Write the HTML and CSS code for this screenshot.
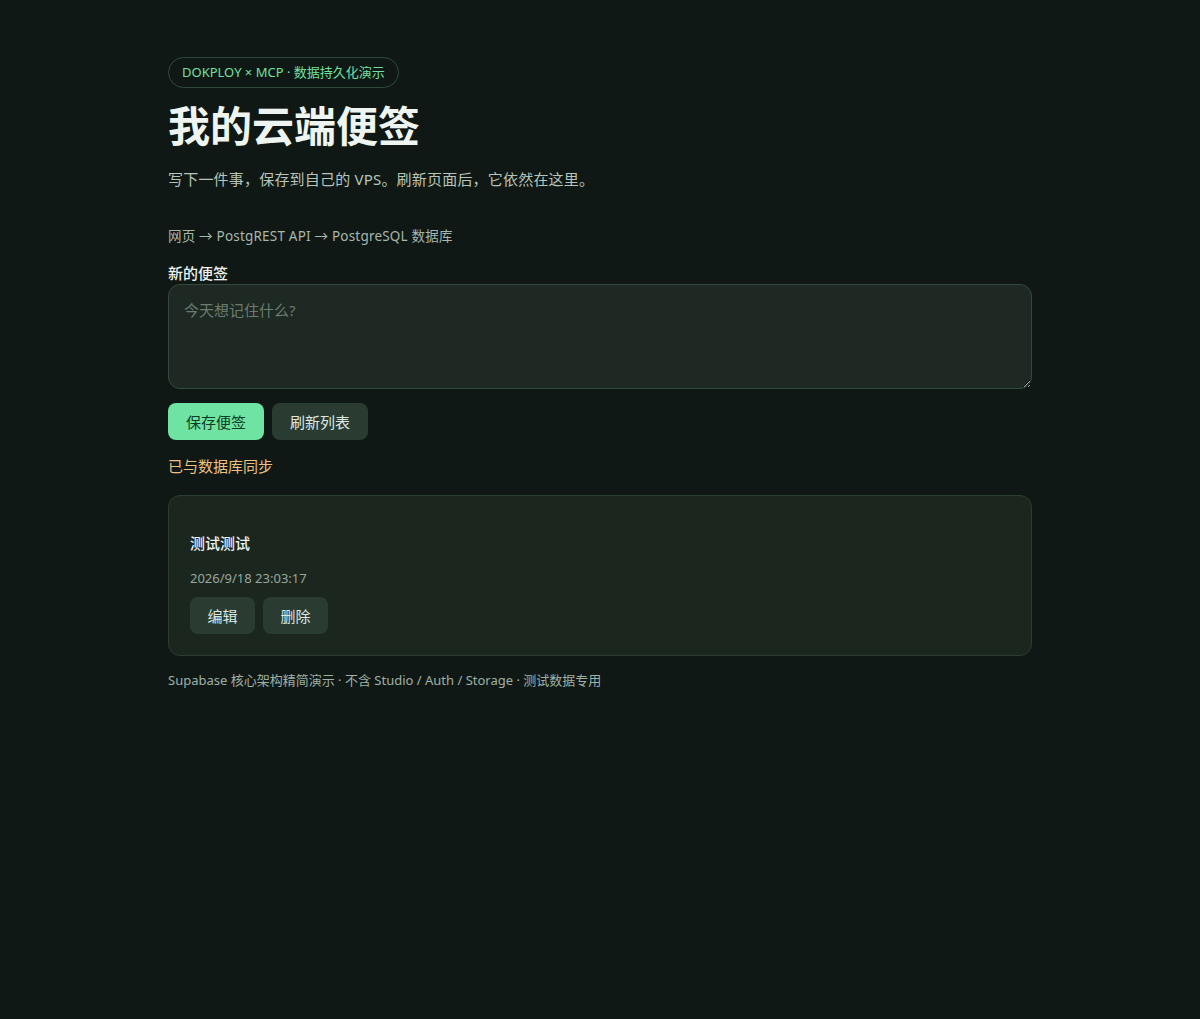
FILE: index.html
```html
<!DOCTYPE html>
<html lang="zh-CN">
<head>
<meta charset="utf-8">
<title>我的云端便签</title>
<link rel="stylesheet" href="styles.css">
</head>
<body>
<main class="wrap">
  <header class="hero">
    <span class="badge">DOKPLOY × MCP · 数据持久化演示</span>
    <h1 class="title">我的云端便签</h1>
    <p class="lead">写下一件事，保存到自己的 VPS。刷新页面后，它依然在这里。</p>
    <p class="flow">网页 → PostgREST API → PostgreSQL 数据库</p>
  </header>
  <section class="editor">
    <label class="label" for="note">新的便签</label>
    <textarea id="note" class="input" placeholder="今天想记住什么?"></textarea>
    <div class="actions">
      <button class="btn btn-primary">保存便签</button>
      <button class="btn btn-secondary">刷新列表</button>
    </div>
    <p class="status">已与数据库同步</p>
  </section>
  <section class="list">
    <article class="note">
      <p class="note-text">测试测试</p>
      <p class="note-time">2026/9/18 23:03:17</p>
      <div class="note-actions">
        <button class="btn btn-secondary btn-small">编辑</button>
        <button class="btn btn-secondary btn-small">删除</button>
      </div>
    </article>
  </section>
  <footer class="foot">Supabase 核心架构精简演示 · 不含 Studio / Auth / Storage · 测试数据专用</footer>
</main>
</body>
</html>
```
FILE: styles.css
```css
* { box-sizing: border-box; }
html, body { margin: 0; padding: 0; }
body {
  background: #101815;
  color: #e6ede8;
  font-family: "Noto Sans", "Noto Sans CJK SC", sans-serif;
  min-height: 1019px;
}
.wrap {
  width: 864px;
  margin: 0 auto;
  padding-top: 57px;
}
.hero { display: flex; flex-direction: column; align-items: flex-start; }
.badge {
  display: inline-flex;
  align-items: center;
  height: 31px;
  padding: 0 13px;
  border: 1px solid #2e4a3c;
  border-radius: 16px;
  color: #6fe0a2;
  font-size: 13px;
  line-height: 1;
}
.title {
  margin: 12px 0 0;
  font-family: "Noto Sans CJK SC", sans-serif;
  font-size: 42px;
  font-weight: 700;
  line-height: 48px;
  color: #eef4ef;
  letter-spacing: 0;
}
.lead {
  margin: 20px 0 0;
  font-size: 15px;
  line-height: 22px;
  color: #b7c4bb;
  letter-spacing: 0.2px;
}
.flow {
  margin: 37px 0 0;
  font-size: 13.5px;
  line-height: 18px;
  color: #a7b6ac;
  letter-spacing: 0.2px;
}
.editor { display: flex; flex-direction: column; margin-top: 18px; }
.label {
  font-size: 15px;
  font-weight: 500;
  line-height: 20px;
  color: #eef3ef;
  margin-bottom: 1px;
}
.input {
  height: 105px;
  width: 100%;
  background: #1d2922;
  border: 1px solid #34493d;
  border-radius: 12px;
  padding: 14px 15px;
  color: #e6ede8;
  font-family: "Noto Sans", "Noto Sans CJK SC", sans-serif;
  font-size: 15px;
  line-height: 22px;
  resize: vertical;
}
.input::placeholder { color: #6c7b71; }
.actions { display: flex; gap: 8px; margin-top: 14px; }
.btn {
  height: 37px;
  border: 0;
  border-radius: 8px;
  padding: 0 18px;
  font-family: "Noto Sans", "Noto Sans CJK SC", sans-serif;
  font-size: 15px;
  cursor: pointer;
}
.btn-primary { background: #6ee3a2; color: #0d3d26; }
.btn-secondary { background: #2a3c32; color: #dde8e1; }
.btn-small { width: 65px; padding: 0; }
.status {
  margin: 15px 0 0;
  font-size: 15px;
  line-height: 22px;
  color: #eec083;
}
.list { margin-top: 18px; }
.note {
  background: #1b261f;
  border: 1px solid #2b3d33;
  border-radius: 12px;
  padding: 36px 21px 21px;
}
.note-text {
  margin: 0;
  font-size: 15px;
  font-weight: 500;
  line-height: 22px;
  color: #eef3ef;
}
.note-time {
  margin: 15px 0 0;
  font-size: 13px;
  line-height: 18px;
  color: #98a79d;
}
.note-actions { display: flex; gap: 8px; margin-top: 10px; }
.foot {
  margin-top: 15px;
  font-size: 13px;
  line-height: 18px;
  color: #9fb0a5;
}
```
